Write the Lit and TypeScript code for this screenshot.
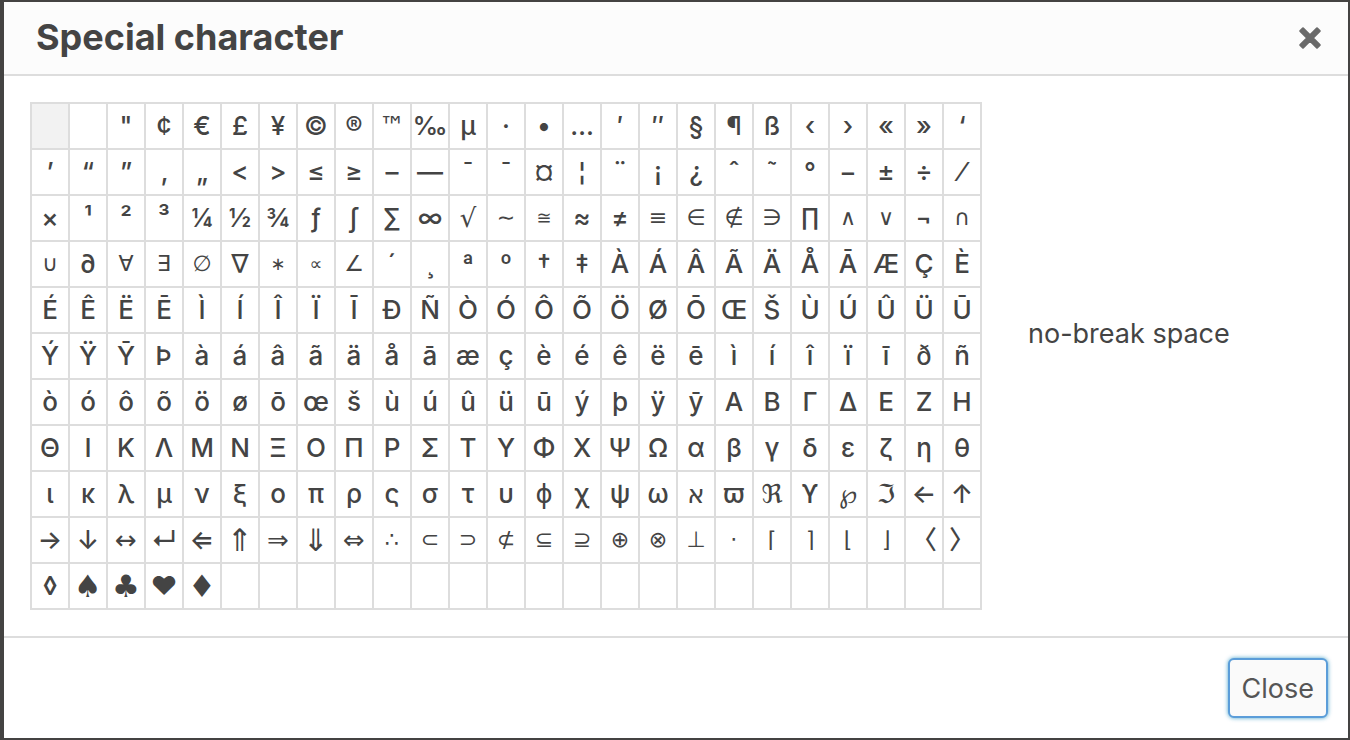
import { LitElement, html, css } from "lit";
import { customElement, state } from "lit/decorators.js";
import { classMap } from "lit/directives/class-map.js";

const ROWS: string[][] = [
  ["\u00a0", "\u00a0", ..."\"¢€£¥©®™‰µ·•…′″§¶ß‹›«»‘"],
  [..."’“”‚„<>≤≥–—¯¯¤¦¨¡¿ˆ˜°−±÷⁄"],
  [..."×¹²³¼½¾ƒ∫∑∞√∼≅≈≠≡∈∉∋∏∧∨¬∩"],
  [..."∪∂∀∃∅∇∗∝∠´¸ªº†‡ÀÁÂÃÄÅĀÆÇÈ"],
  [..."ÉÊËĒÌÍÎÏĪÐÑÒÓÔÕÖØŌŒŠÙÚÛÜŪ"],
  [..."ÝŸȲÞàáâãäåāæçèéêëēìíîïīðñ"],
  [..."òóôõöøōœšùúûüūýþÿȳΑΒΓΔΕΖΗ"],
  [..."ΘΙΚΛΜΝΞΟΠΡΣΤΥΦΧΨΩαβγδεζηθ"],
  [..."ικλμνξοπρςστυϕχψωאϖℜϒ℘ℑ←↑"],
  [..."→↓↔↵⇐⇑⇒⇓⇔∴⊂⊃⊄⊆⊇⊕⊗⊥⋅⌈⌉⌊⌋〈〉"],
  [..."◊♠♣♥♦"],
];

const COLUMNS = 25;

// Mathematical operators are drawn smaller and lighter than the letters.
const SMALL = new Set([..."∼≅≡∈∉∋∧∨∩∪∀∃∅∝∠∴⊂⊃⊄⊆⊇⊕⊗⊥⋅⌈⌉⌊⌋"]);
const TINY = new Set([..."∗∝≅"]);
const SYMBOL = new Set([..."™√⇒⇔↔ϕ"]);
const LARGE = new Set([..."♠♣♦⇑⇓"]);

@customElement("app-root")
export class AppRoot extends LitElement {
  static styles = css`
    :host {
      display: block;
      box-sizing: border-box;
      min-height: 100vh;
      padding: 2px 2px 2px 4px;
      background: #444342;
      color: #444;
      font-family: Inter, "DejaVu Sans", "Noto Sans CJK SC", sans-serif;
      font-size: 27px;
    }
    .dialog {
      background: #fff;
    }
    .head {
      display: flex;
      align-items: center;
      justify-content: space-between;
      height: 72px;
      padding: 0 26px 0 32px;
      background: #fcfcfc;
      border-bottom: 2px solid #ddd;
    }
    .title {
      margin: 0;
      padding-bottom: 2px;
      font-size: 36px;
      line-height: 40px;
      font-weight: 700;
    }
    .dismiss {
      display: flex;
      padding: 0;
      border: 0;
      background: none;
      color: #6a6a6a;
    }
    .body {
      display: flex;
      align-items: center;
      gap: 46px;
      padding: 26px;
    }
    .map {
      flex: none;
      border-collapse: collapse;
      font-size: 26px;
      font-weight: 500;
    }
    .cell {
      box-sizing: border-box;
      width: 38px;
      height: 46px;
      padding: 0;
      border: 2px solid #ddd;
    }
    .active {
      background: #f2f2f2;
    }
    .char {
      display: flex;
      align-items: center;
      justify-content: center;
      width: 36px;
      height: 44px;
      padding: 0;
      border: 0;
      background: none;
      color: inherit;
      font: inherit;
      line-height: 44px;
      white-space: pre;
    }
    .small {
      font-family: "DejaVu Sans", sans-serif;
      font-size: 22px;
    }
    .tiny {
      font-family: "DejaVu Sans", sans-serif;
      font-size: 18px;
    }
    .symbol {
      font-family: "DejaVu Sans", sans-serif;
      font-size: 26px;
    }
    .large {
      font-family: "DejaVu Sans", sans-serif;
      font-size: 31px;
    }
    .preview {
      padding-bottom: 44px;
      line-height: 36px;
    }
    .foot {
      display: flex;
      justify-content: flex-end;
      padding: 20px;
      border-top: 2px solid #ddd;
    }
    .close {
      height: 60px;
      padding: 0 12px;
      border: 2px solid #5b9dd9;
      border-radius: 6px;
      background: #fafafa;
      box-shadow: 0 0 4px rgba(30, 140, 190, 0.8);
      color: #555;
      font: inherit;
    }
  `;

  @state() private row = 0;
  @state() private col = 0;

  private renderCell(r: number, c: number) {
    const ch = ROWS[r][c];
    const active = r === this.row && c === this.col;
    if (ch === undefined) return html`<td class="cell"></td>`;
    const tiny = TINY.has(ch);
    const classes = {
      char: true,
      tiny,
      small: !tiny && SMALL.has(ch),
      symbol: SYMBOL.has(ch),
      large: LARGE.has(ch),
    };
    return html`<td class=${classMap({ cell: true, active })}><button
      class=${classMap(classes)}
      type="button"
      @mouseover=${() => {
        this.row = r;
        this.col = c;
      }}
    >${ch}</button></td>`;
  }

  render() {
    return html`
      <div class="dialog" role="dialog" aria-labelledby="title">
        <header class="head">
          <h1 class="title" id="title">Special character</h1>
          <button class="dismiss" type="button" aria-label="Close dialog">
            <svg width="24" height="24" viewBox="0 0 24 24" aria-hidden="true">
              <path
                d="M5 2.2 12 9.2 19 2.2 21.8 5 14.8 12 21.8 19 19 21.8 12 14.8 5 21.8 2.2 19 9.2 12 2.2 5Z"
                fill="currentColor"
                stroke="currentColor"
                stroke-width="2"
                stroke-linejoin="round"
              />
            </svg>
          </button>
        </header>
        <main class="body">
          <table class="map">
            <tbody>
              ${ROWS.map(
                (_, r) => html`<tr>${Array.from({ length: COLUMNS }, (_v, c) => this.renderCell(r, c))}</tr>`,
              )}
            </tbody>
          </table>
          <div class="preview">no-break space</div>
        </main>
        <footer class="foot">
          <button class="close" type="button">Close</button>
        </footer>
      </div>
    `;
  }
}
